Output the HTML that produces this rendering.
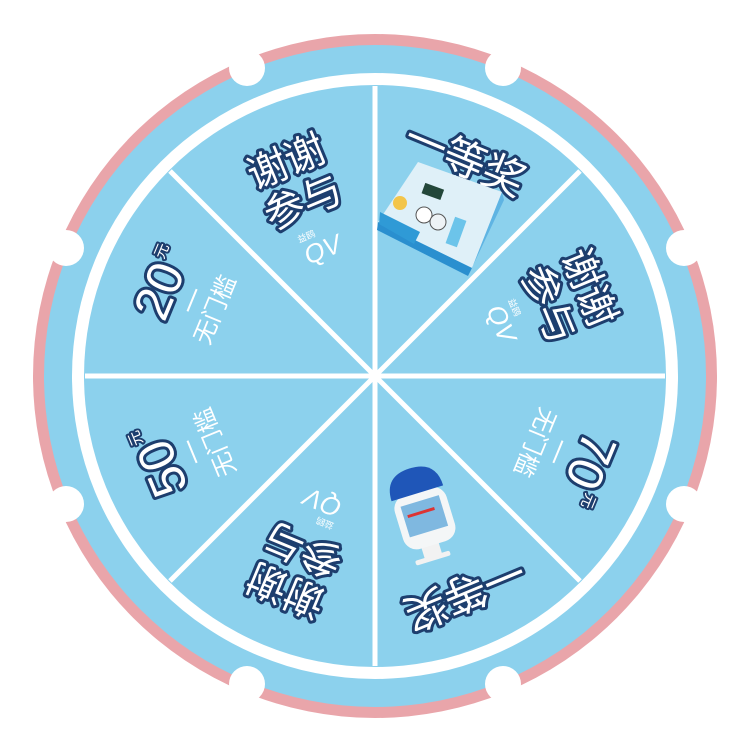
<!DOCTYPE html>
<html><head><meta charset="utf-8"><style>
html,body{margin:0;padding:0;background:#fff;width:750px;height:750px;overflow:hidden}
svg{display:block}
.t{font-family:"Liberation Sans","Noto Sans CJK SC",sans-serif;font-weight:normal;fill:#fff;stroke:#1d3e6e;stroke-width:6;paint-order:stroke;stroke-linejoin:round;text-anchor:middle}
.w{font-family:"Liberation Sans","Noto Sans CJK SC",sans-serif;fill:#fff;text-anchor:middle}
</style></head><body>
<svg width="750" height="750" viewBox="0 0 750 750">
<defs>
<g id="xx">
  <text class="t" x="0" y="-218" font-size="40">谢谢</text>
  <text class="t" x="0" y="-174" font-size="40">参与</text>
  <text class="w" x="0" y="-128" font-size="26" font-style="italic">QV</text>
  <text class="w" x="-10" y="-152" font-size="9">益鸥</text>
</g>
<g id="yd">
  <text class="t" x="0" y="-220" font-size="42">一等奖</text>
</g>
</defs>
<circle cx="375" cy="376" r="342" fill="#e9a5aa"/>
<circle cx="375" cy="376" r="331" fill="#8cd1ed"/>
<circle cx="375" cy="376" r="303" fill="#fff"/>
<circle cx="375" cy="376" r="291" fill="#8cd1ed"/>
<g fill="#fff">
  <circle cx="247" cy="68" r="18"/><circle cx="503" cy="68" r="18"/>
  <circle cx="684" cy="248" r="18"/><circle cx="684" cy="504" r="18"/>
  <circle cx="503" cy="684" r="18"/><circle cx="247" cy="684" r="18"/>
  <circle cx="66" cy="504" r="18"/><circle cx="66" cy="248" r="18"/>
</g>
<g stroke="#fff" stroke-width="5">
  <line x1="375" y1="86" x2="375" y2="666"/>
  <line x1="85" y1="376" x2="665" y2="376"/>
  <line x1="170" y1="171" x2="580" y2="581"/>
  <line x1="580" y1="171" x2="170" y2="581"/>
</g>
<g transform="translate(375,376)">
  <g transform="rotate(-22.5)"><use href="#xx"/></g>
  <g transform="rotate(67.5)"><use href="#xx"/></g>
  <g transform="rotate(202.5)"><use href="#xx"/></g>
  <g transform="rotate(22.5)"><use href="#yd"/></g>
  <g transform="rotate(157.5)"><use href="#yd"/></g>
  <g transform="rotate(-67.5)">
    <text class="t" x="-4" y="-215" font-size="50">20</text>
    <text class="t" x="34" y="-240" font-size="15" style="stroke-width:4">元</text>
    <line x1="-12" y1="-198" x2="12" y2="-198" stroke="#fff" stroke-width="2"/>
    <text class="w" x="0" y="-165" font-size="24">无门槛</text>
  </g>
  <g transform="rotate(112.5)">
    <text class="t" x="-4" y="-215" font-size="50">70</text>
    <text class="t" x="34" y="-240" font-size="15" style="stroke-width:4">元</text>
    <line x1="-12" y1="-198" x2="12" y2="-198" stroke="#fff" stroke-width="2"/>
    <text class="w" x="0" y="-165" font-size="24">无门槛</text>
  </g>
  <g transform="rotate(-112.5)">
    <text class="t" x="-4" y="-215" font-size="50">50</text>
    <text class="t" x="34" y="-240" font-size="15" style="stroke-width:4">元</text>
    <line x1="-12" y1="-198" x2="12" y2="-198" stroke="#fff" stroke-width="2"/>
    <text class="w" x="0" y="-165" font-size="24">无门槛</text>
  </g>
</g>
<!-- gift box -->
<polygon points="418,162 502,192 472,268 378,222" fill="#dff0f8"/>
<polygon points="378,222 472,268 468,276 377,230" fill="#2a8fcf"/>
<polygon points="472,268 502,192 504,200 468,276" fill="#5fb4e3"/>
<polygon points="380,212 420,232 414,244 379,224" fill="#2f9ad6"/>
<rect x="423" y="186" width="20" height="11" fill="#23473a" transform="rotate(20 433 191)"/>
<circle cx="400" cy="203" r="7" fill="#f3c54a"/>
<circle cx="424" cy="215" r="8" fill="#fff" stroke="#555" stroke-width="1"/>
<circle cx="438" cy="222" r="8" fill="#eef3f6" stroke="#555" stroke-width="1"/>
<rect x="450" y="218" width="12" height="28" fill="#6cc4ea" transform="rotate(20 456 232)"/>
<!-- bottle -->
<g transform="rotate(-17 425 515)">
  <rect x="412" y="540" width="18" height="18" fill="#f2f2f2"/>
  <rect x="402" y="556" width="36" height="5" rx="2" fill="#f2f2f2"/>
  <rect x="397" y="490" width="54" height="56" rx="14" fill="#f4f6f7"/>
  <path d="M397 492 Q397 466 424 466 Q451 466 451 492 Z" fill="#1f56b8"/>
  <rect x="404" y="500" width="40" height="32" fill="#7fb8e0"/>
  <rect x="408" y="510" width="28" height="3" fill="#d33"/>
</g>
</svg>
</body></html>
